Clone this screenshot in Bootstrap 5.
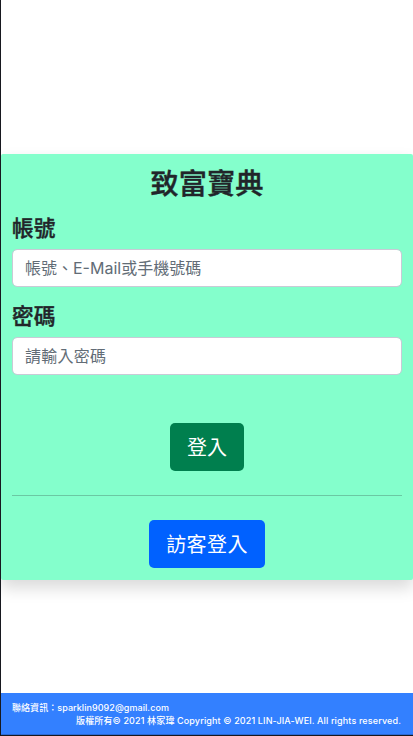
<!DOCTYPE html>
<html lang="zh-Hant">
<head>
<meta charset="utf-8">
<meta name="viewport" content="width=device-width, initial-scale=1">
<title>致富寶典</title>
<link href="https://cdn.jsdelivr.net/npm/bootstrap@5.3.0/dist/css/bootstrap.min.css" rel="stylesheet">
<style>
body { font-family: Inter, "Noto Sans CJK TC", sans-serif; height: 100vh; border-left: 1px solid #17181f; border-bottom: 1px solid #17181f; overflow: hidden; }
.login-panel { background: #84ffcc; height: 426px; padding: 13px 11px 12px; margin-top: 154px; border-radius: 2px; box-shadow: 0 8px 16px rgba(0,0,0,.15); }
.login-panel h1 { line-height: 34px; font-weight: 500; -webkit-text-stroke: .4px #212529; margin-bottom: 14px; }
.login-panel label { line-height: 26px; font-weight: 500; -webkit-text-stroke: .4px #212529; }
.login-panel .form-control { border-color: #c9cad6; height: 38px; border-radius: 5px; }
.login-panel .form-control::placeholder { color: #626c76; }
#password::placeholder { letter-spacing: .25px; }
.login-panel .btn { height: 48px; border-radius: 5px; padding-top: 9px; padding-bottom: 7px; }
.btn-login { background: #007f4e; color: #fff; }
.btn-guest { background: #0061ff; color: #fff; letter-spacing: .4px; }
.login-panel hr { margin: 24px 0; color: #212529; }
.site-footer { background: #3380ff; height: 42px; padding: 8px 11px 0; font-size: 9px; font-weight: 500; line-height: 13px; letter-spacing: .06px; border-bottom: 1px solid #2a69d4; white-space: nowrap; }
.copyright { letter-spacing: .13px; padding-right: 1px; }
</style>
<script src="https://cdn.jsdelivr.net/npm/bootstrap@5.3.0/dist/js/bootstrap.bundle.min.js"></script>
</head>
<body class="d-flex flex-column">
<main class="login-panel flex-shrink-0">
  <form>
    <h1 class="text-center">致富寶典</h1>
    <label class="h4 mb-2 d-block" for="account">帳號</label>
    <input class="form-control mb-3" id="account" type="text" placeholder="帳號、E-Mail或手機號碼">
    <label class="h4 mb-2 d-block" for="password">密碼</label>
    <input class="form-control mb-5" id="password" type="password" placeholder="請輸入密碼">
    <div class="text-center"><button class="btn btn-lg btn-login d-inline-block align-top" type="button">登入</button></div>
    <hr>
    <div class="text-center"><button class="btn btn-lg btn-guest d-inline-block align-top" type="button">訪客登入</button></div>
  </form>
</main>
<footer class="site-footer mt-auto text-white">
  <div>聯絡資訊：sparklin9092@gmail.com</div>
  <div class="copyright text-end">版權所有© 2021 林家瑋 Copyright © 2021 LIN-JIA-WEI. All rights reserved.</div>
</footer>
</body>
</html>
